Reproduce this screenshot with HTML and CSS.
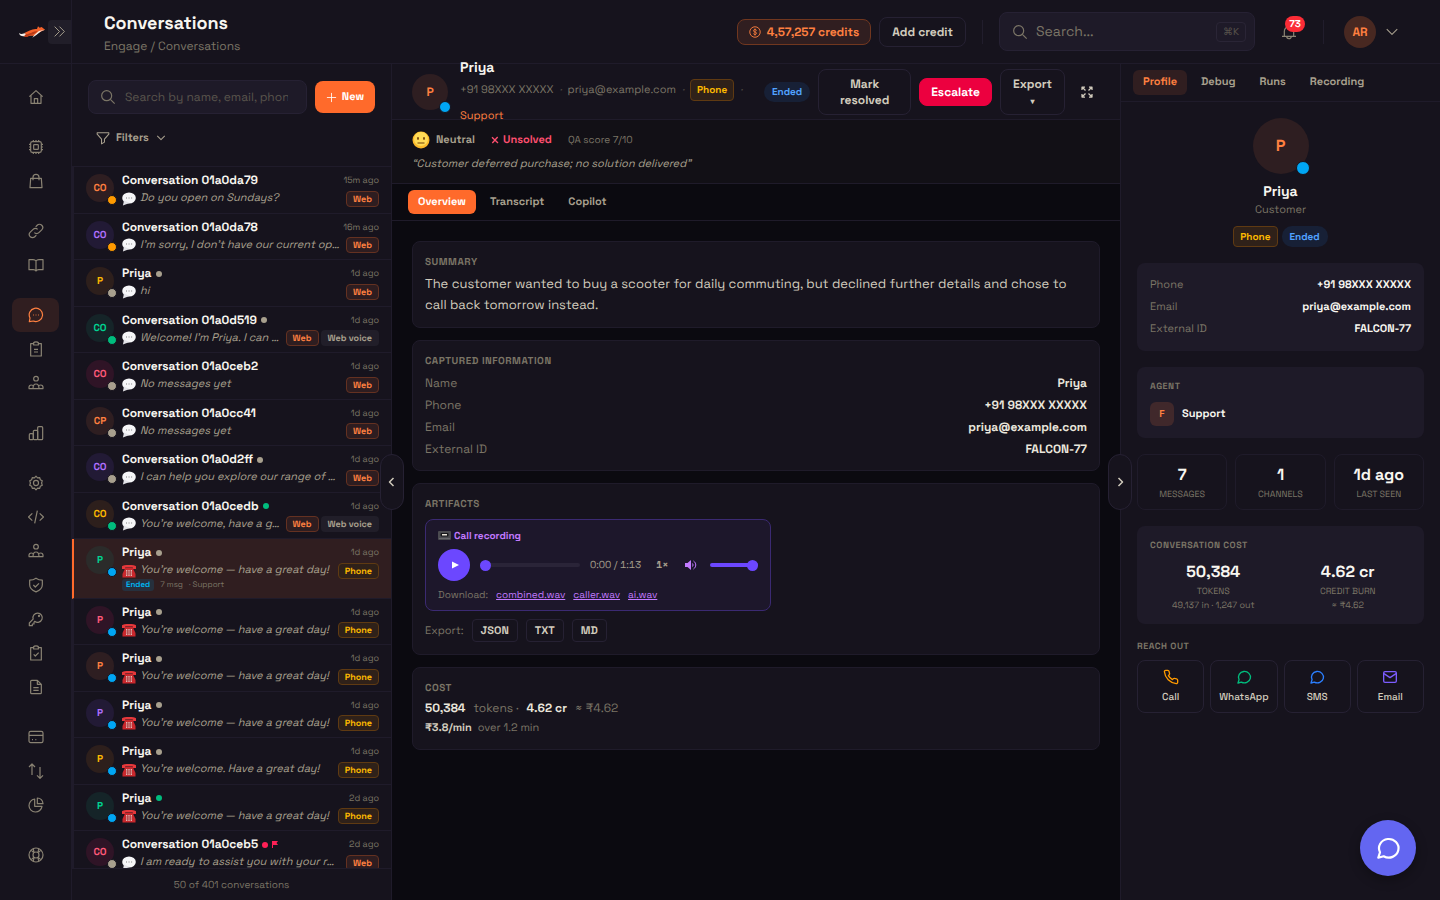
FILE: index.html
```html
<!DOCTYPE html>
<html lang="en">
<head>
  <meta charset="utf-8">
  <meta name="viewport" content="width=device-width, initial-scale=1">
  <title>Conversations</title>
  <link rel="stylesheet" href="styles.css">
</head>
<body>

<!-- icon sprite -->
<svg class="sprite" aria-hidden="true">
  <symbol id="i-home" viewBox="0 0 24 24"><path d="M2 11.500 12 2.500l10 9M4.500 9.500V21.500h15V9.500M9.500 21.500v-7h5v7"/></symbol>
  <symbol id="i-cpu" viewBox="0 0 24 24"><rect x="4" y="4" width="16" height="16" rx="2.500"/><rect x="8.500" y="8.500" width="7" height="7" rx="1"/><path d="M8 4V1.500M12 4V1.500M16 4V1.500M8 22.500V20M12 22.500V20M16 22.500V20M4 8H1.500M4 12H1.500M4 16H1.500M22.500 8H20M22.500 12H20M22.500 16H20"/></symbol>
  <symbol id="i-bag" viewBox="0 0 24 24"><path d="M4 8h16l1 14H3L4 8zM7.500 11V6.500a4.500 4.500 0 0 1 9 0V11"/></symbol>
  <symbol id="i-link" viewBox="0 0 24 24"><path d="M9.500 14.500a4.800 4.800 0 0 0 6.800 0l4.300-4.300a4.800 4.800 0 0 0-6.800-6.800L11.500 5.700M14.500 9.500a4.800 4.800 0 0 0-6.800 0l-4.300 4.300a4.800 4.800 0 0 0 6.800 6.800l2.300-2.300"/></symbol>
  <symbol id="i-book" viewBox="0 0 24 24"><path d="M12 6c-1-1.500-2.500-2-4.500-2H1.500v15H8c2 0 3.200.7 4 2 .8-1.300 2-2 4-2h6.500V4h-6C14.500 4 13 4.500 12 6zM12 6v15"/></symbol>
  <symbol id="i-chat" viewBox="0 0 24 24"><path d="M2 22l1-5.500A10 10 0 1 1 8 21L2 22z"/><path d="M7.500 12h.8M11.600 12h.8M15.700 12h.8" stroke-width="2"/></symbol>
  <symbol id="i-clip" viewBox="0 0 24 24"><path d="M8.500 4H4v18.500h16V4h-4.500M8.500 6V2.500C9.500 1 14.500 1 15.500 2.500V6zM9 16.500h6M9 12.500h6"/></symbol>
  <symbol id="i-users" viewBox="0 0 24 24"><circle cx="12" cy="5.500" r="3.500"/><path d="M1.500 20.500v-2c0-2 1.500-3.500 3.500-3.500 1.500 0 3 1 3.500 2.500M22.500 20.500v-2c0-2-1.500-3.500-3.500-3.500-1.500 0-3 1-3.500 2.500M7.500 20.500c0-4 1.500-7 4.500-7s4.500 3 4.500 7M1 20.500h22"/></symbol>
  <symbol id="i-bars" viewBox="0 0 24 24"><rect x="2" y="13" width="6" height="9" rx="1.500"/><rect x="8" y="8" width="6.500" height="14" rx="1.500"/><rect x="14.500" y="2.500" width="7.500" height="19.500" rx="1.500"/></symbol>
  <symbol id="i-gear" viewBox="0 0 24 24"><circle cx="12" cy="12" r="3.800"/><path d="M12 1.800l2.300 2.400 3.300-.4.800 3.200 3 1.500-1 3.500 1 3.500-3 1.500-.8 3.200-3.300-.4L12 22.200 9.700 19.800l-3.300.4-.8-3.200-3-1.500 1-3.500-1-3.500 3-1.500.8-3.200 3.300.4z"/></symbol>
  <symbol id="i-code" viewBox="0 0 24 24"><path d="M6.500 6.500.8 12l5.700 5.500M17.500 6.500l5.700 5.500-5.700 5.500M14 2.500l-4 19"/></symbol>
  <symbol id="i-shield" viewBox="0 0 24 24"><path d="M12 1.800c3 2.200 6 3 9.500 3v7c0 5-4 8.500-9.500 10.500C6.500 20.300 2.500 16.800 2.500 11.800v-7c3.500 0 6.500-.8 9.500-3zM8 12l3 3 5.500-5.500"/></symbol>
  <symbol id="i-key" viewBox="0 0 24 24"><path d="M10 15.500a7 7 0 1 0-2.300-3.400L2 18v4h4.500v-2.500H9V17z"/><circle cx="16.500" cy="7.500" r=".8"/></symbol>
  <symbol id="i-task" viewBox="0 0 24 24"><path d="M8.500 4H4v18.500h16V4h-4.500M8.500 6V2.500C9.500 1 14.500 1 15.500 2.500V6zM8.500 14l2.500 2.500 5-5"/></symbol>
  <symbol id="i-doc" viewBox="0 0 24 24"><path d="M14 2H5.500A1.500 1.500 0 0 0 4 3.500v17A1.500 1.500 0 0 0 5.500 22h13a1.500 1.500 0 0 0 1.500-1.500V8zM14 2v6h6M8 13h8M8 17h8"/></symbol>
  <symbol id="i-card" viewBox="0 0 24 24"><rect x="1.500" y="3.500" width="21" height="17" rx="2.500"/><path d="M1.500 9.500h21M6 16h1.500M11 16h1.500"/></symbol>
  <symbol id="i-swap" viewBox="0 0 24 24"><path d="M6 18V1.500M1.500 6 6 1.500 10.500 6M18 6v17M13.500 18.500 18 23l4.500-4.500"/></symbol>
  <symbol id="i-pie" viewBox="0 0 24 24"><path d="M10 3a9.800 9.800 0 1 0 11 11H10zM14 1.500V10h8.500A8.500 8.500 0 0 0 14 1.500z"/></symbol>
  <symbol id="i-buoy" viewBox="0 0 24 24"><circle cx="12" cy="12" r="10.500"/><circle cx="12" cy="12" r="4.500"/><path d="M5 5l3.500 3.500M19 5l-3.500 3.500M5 19l3.500-3.500M19 19l-3.500-3.500M8 3l1 5M16 3l-1 5M8 21l1-5M16 21l-1-5"/></symbol>
  <symbol id="i-search" viewBox="0 0 24 24"><circle cx="10" cy="10" r="7.500"/><path d="M15.500 15.500 22 22"/></symbol>
  <symbol id="i-down" viewBox="0 0 24 24"><path d="M3 7l9 9 9-9"/></symbol>
  <symbol id="i-left" viewBox="0 0 24 24"><path d="M15 4l-8 8 8 8"/></symbol>
  <symbol id="i-right" viewBox="0 0 24 24"><path d="M9 4l8 8-8 8"/></symbol>
  <symbol id="i-dright" viewBox="0 0 24 24"><path d="M3 3l9 9-9 9M12 3l9 9-9 9"/></symbol>
  <symbol id="i-funnel" viewBox="0 0 24 24"><path d="M2 3h20v2.500L14.500 14v5L9.500 22v-8L2 5.500z"/></symbol>
  <symbol id="i-plus" viewBox="0 0 24 24"><path d="M12 2v20M2 12h20"/></symbol>
  <symbol id="i-coin" viewBox="0 0 24 24"><circle cx="12" cy="12" r="10.500"/><path d="M15 9c0-1.500-1.300-2-3-2s-3 .8-3 2.500 1.500 2.200 3 2.500 3 .8 3 2.500-1.300 2.500-3 2.500-3-.5-3-2M12 5v14"/></symbol>
  <symbol id="i-bell" viewBox="0 0 24 24"><path d="M5 18.500V11a7 7 0 0 1 14 0v7.500M1.500 18.500h21M8.500 18.500a3.500 3.500 0 0 0 7 0"/></symbol>
  <symbol id="i-expand" viewBox="0 0 24 24"><path d="M2 8V2h6M2.500 2.500 9 9M16 2h6v6M21.500 2.500 15 9M2 16v6h6M2.500 21.500 9 15M16 22h6v-6M21.500 21.500 15 15"/></symbol>
  <symbol id="i-phone" viewBox="0 0 24 24"><path d="M22 16.900v3a2 2 0 0 1-2.200 2A19.800 19.800 0 0 1 2.100 4.200 2 2 0 0 1 4.100 2h3a2 2 0 0 1 2 1.700c.1 1 .4 1.900.7 2.800a2 2 0 0 1-.5 2.100L8.100 9.900a16 16 0 0 0 6 6l1.300-1.300a2 2 0 0 1 2.100-.4c.9.300 1.800.6 2.800.7a2 2 0 0 1 1.700 2z"/></symbol>
  <symbol id="i-bubble" viewBox="0 0 24 24"><path d="M3 21l1.600-5A9 8.600 0 1 1 8 19.600z"/></symbol>
  <symbol id="i-mail" viewBox="0 0 24 24"><rect x="2.500" y="4" width="19" height="16" rx="2"/><path d="M3 7l9 6 9-6"/></symbol>
  <symbol id="i-cross" viewBox="0 0 24 24"><path d="M3 4l18 17M20 3 4 21"/></symbol>
  <!-- coloured pictograms -->
  <symbol id="e-chat" viewBox="0 0 14 14"><ellipse cx="7" cy="6" rx="6.800" ry="5.600" fill="#f6f6f8"/><path d="M2 8.500.9 13.600 7.500 11z" fill="#e3e3e8"/><path d="M4 6h.9M6.600 6h.9M9.200 6h.9" stroke="#777" stroke-width="1.200"/></symbol>
  <symbol id="e-phone" viewBox="0 0 14 14"><path d="M0 5V2.200C1 .6 13 .6 14 2.200V5h-3.200V3.500H3.200V5z" fill="#e5383b"/><path d="M3.200 4h7.600l2.700 6v3.500H.5V10z" fill="#c9282d"/><rect x="4" y="6" width="6" height="6" fill="#e9b4b2"/><path d="M5.500 6v6M7 6v6M8.500 6v6M4 8h6M4 10h6" stroke="#a8383b" stroke-width=".7"/></symbol>
  <symbol id="e-face" viewBox="0 0 18 18"><circle cx="9" cy="9" r="8.500" fill="#fbb92b"/><circle cx="9" cy="8" r="7" fill="#ffdb56"/><ellipse cx="6" cy="7.500" rx="1" ry="1.400" fill="#7a4b12"/><ellipse cx="12" cy="7.500" rx="1" ry="1.400" fill="#7a4b12"/><path d="M5.500 12h7" stroke="#7a4b12" stroke-width="1.100"/></symbol>
  <symbol id="e-tape" viewBox="0 0 13 9"><rect width="13" height="9" rx="1" fill="#4b4b50"/><rect x="2.500" y="2" width="8" height="3.500" rx="1" fill="#17171a"/><rect x="4" y="3" width="5" height="1.500" fill="#e9e4da"/><path d="M1 7.500h11" stroke="#66666b"/></symbol>
</svg>

<div class="app">
  <aside class="sidebar">
    <div class="brand">
      <a href="#" aria-label="Home">
        <svg class="logo" viewBox="0 0 78 34">
          <path d="M0 20c6 5 14 2 20 0l2 8C12 32 2 30 0 20z" fill="#f4efe9"/>
          <path d="M16 20c12-6 24-14 38-12l3-8 5 4 6-2 10 8-10 5-10 5-12 8H32l-8 3-10-1 8-6z" fill="#f4622a"/>
          <path d="M20 24c12 0 22-10 36-10-8 8-14 12-24 12l-8 6-8-1z" fill="#b83a17"/>
          <path d="M78 10 66 15 52 26l-12 8 6-8 14-12z" fill="#f4efe9"/>
        </svg>
      </a>
      <button class="collapse" aria-label="Expand menu"><svg class="icon"><use href="#i-dright"/></svg></button>
    </div>
    <nav class="nav">
      <div class="nav-group"><a href="#" aria-label="Home"><svg class="icon"><use href="#i-home"/></svg></a></div>
      <div class="nav-group">
        <a href="#" aria-label="Models"><svg class="icon"><use href="#i-cpu"/></svg></a>
        <a href="#" aria-label="Store"><svg class="icon"><use href="#i-bag"/></svg></a>
      </div>
      <div class="nav-group">
        <a href="#" aria-label="Links"><svg class="icon"><use href="#i-link"/></svg></a>
        <a href="#" aria-label="Knowledge"><svg class="icon"><use href="#i-book"/></svg></a>
      </div>
      <div class="nav-group">
        <a href="#" class="active" aria-label="Conversations"><svg class="icon"><use href="#i-chat"/></svg></a>
        <a href="#" aria-label="Forms"><svg class="icon"><use href="#i-clip"/></svg></a>
        <a href="#" aria-label="Contacts"><svg class="icon"><use href="#i-users"/></svg></a>
      </div>
      <div class="nav-group"><a href="#" aria-label="Analytics"><svg class="icon"><use href="#i-bars"/></svg></a></div>
      <div class="nav-group">
        <a href="#" aria-label="Settings"><svg class="icon"><use href="#i-gear"/></svg></a>
        <a href="#" aria-label="Developers"><svg class="icon"><use href="#i-code"/></svg></a>
        <a href="#" aria-label="Team"><svg class="icon"><use href="#i-users"/></svg></a>
        <a href="#" aria-label="Security"><svg class="icon"><use href="#i-shield"/></svg></a>
        <a href="#" aria-label="Keys"><svg class="icon"><use href="#i-key"/></svg></a>
        <a href="#" aria-label="Tasks"><svg class="icon"><use href="#i-task"/></svg></a>
        <a href="#" aria-label="Documents"><svg class="icon"><use href="#i-doc"/></svg></a>
      </div>
      <div class="nav-group">
        <a href="#" aria-label="Billing"><svg class="icon"><use href="#i-card"/></svg></a>
        <a href="#" aria-label="Transactions"><svg class="icon"><use href="#i-swap"/></svg></a>
        <a href="#" aria-label="Usage"><svg class="icon"><use href="#i-pie"/></svg></a>
      </div>
      <div class="nav-group"><a href="#" aria-label="Help"><svg class="icon"><use href="#i-buoy"/></svg></a></div>
    </nav>
  </aside>

  <div class="main">
    <header class="topbar">
      <div class="page-title">
        <h1>Conversations</h1>
        <p>Engage / Conversations</p>
      </div>
      <a href="#" class="credits"><svg class="icon"><use href="#i-coin"/></svg>4,57,257 credits</a>
      <button class="btn add-credit">Add credit</button>
      <span class="divider"></span>
      <label class="global-search">
        <svg class="icon"><use href="#i-search"/></svg>
        <input type="text" placeholder="Search..." aria-label="Search">
        <kbd>⌘K</kbd>
      </label>
      <button class="bell" aria-label="Notifications"><svg class="icon"><use href="#i-bell"/></svg><span class="count">73</span></button>
      <span class="divider"></span>
      <button class="account" aria-label="Account"><span class="me">AR</span><svg class="icon"><use href="#i-down"/></svg></button>
    </header>

    <div class="workspace">
      <!-- conversation list -->
      <section class="list-panel">
        <div class="list-head">
          <div class="list-search">
            <label class="search-box">
              <svg class="icon"><use href="#i-search"/></svg>
              <input type="text" placeholder="Search by name, email, phone" aria-label="Search conversations">
            </label>
            <button class="btn-new"><svg class="icon"><use href="#i-plus"/></svg>New</button>
          </div>
          <button class="filters"><svg class="icon"><use href="#i-funnel"/></svg>Filters<svg class="icon caret"><use href="#i-down"/></svg></button>
        </div>

        <ul class="conversations">
          <li class="conv">
            <span class="avatar orange">CO<i class="status amber"></i></span>
            <div class="conv-body">
              <div class="line"><b>Conversation 01a0da79</b><time>15m ago</time></div>
              <div class="line msg"><svg class="emoji"><use href="#e-chat"/></svg><em>Do you open on Sundays?</em><span class="tag web">Web</span></div>
            </div>
          </li>
          <li class="conv">
            <span class="avatar purple">CO<i class="status amber"></i></span>
            <div class="conv-body">
              <div class="line"><b>Conversation 01a0da78</b><time>16m ago</time></div>
              <div class="line msg"><svg class="emoji"><use href="#e-chat"/></svg><em>I’m sorry, I don’t have our current opening</em><span class="tag web">Web</span></div>
            </div>
          </li>
          <li class="conv">
            <span class="avatar yellow">P<i class="status grey"></i></span>
            <div class="conv-body">
              <div class="line"><b>Priya</b><i class="dot grey"></i><time>1d ago</time></div>
              <div class="line msg"><svg class="emoji"><use href="#e-chat"/></svg><em>hi</em><span class="tag web">Web</span></div>
            </div>
          </li>
          <li class="conv">
            <span class="avatar green">CO<i class="status emerald"></i></span>
            <div class="conv-body">
              <div class="line"><b>Conversation 01a0d519</b><i class="dot grey"></i><time>1d ago</time></div>
              <div class="line msg"><svg class="emoji"><use href="#e-chat"/></svg><em>Welcome! I’m Priya. I can help</em><span class="tag web">Web</span><span class="tag voice">Web voice</span></div>
            </div>
          </li>
          <li class="conv">
            <span class="avatar pink">CO<i class="status grey"></i></span>
            <div class="conv-body">
              <div class="line"><b>Conversation 01a0ceb2</b><time>1d ago</time></div>
              <div class="line msg"><svg class="emoji"><use href="#e-chat"/></svg><em>No messages yet</em><span class="tag web">Web</span></div>
            </div>
          </li>
          <li class="conv">
            <span class="avatar orange">CP<i class="status grey"></i></span>
            <div class="conv-body">
              <div class="line"><b>Conversation 01a0cc41</b><time>1d ago</time></div>
              <div class="line msg"><svg class="emoji"><use href="#e-chat"/></svg><em>No messages yet</em><span class="tag web">Web</span></div>
            </div>
          </li>
          <li class="conv">
            <span class="avatar purple">CO<i class="status grey"></i></span>
            <div class="conv-body">
              <div class="line"><b>Conversation 01a0d2ff</b><i class="dot grey"></i><time>1d ago</time></div>
              <div class="line msg"><svg class="emoji"><use href="#e-chat"/></svg><em>I can help you explore our range of scooters</em><span class="tag web">Web</span></div>
            </div>
          </li>
          <li class="conv">
            <span class="avatar yellow">CO<i class="status emerald"></i></span>
            <div class="conv-body">
              <div class="line"><b>Conversation 01a0cedb</b><i class="dot emerald"></i><time>1d ago</time></div>
              <div class="line msg"><svg class="emoji"><use href="#e-chat"/></svg><em>You’re welcome, have a great</em><span class="tag web">Web</span><span class="tag voice">Web voice</span></div>
            </div>
          </li>
          <li class="conv selected">
            <span class="avatar green">P<i class="status blue"></i></span>
            <div class="conv-body">
              <div class="line"><b>Priya</b><i class="dot grey"></i><time>1d ago</time></div>
              <div class="line msg"><svg class="emoji"><use href="#e-phone"/></svg><em>You’re welcome — have a great day!</em><span class="tag phone">Phone</span></div>
              <div class="line extra"><span class="ended">Ended</span><span>7 msg</span><span>· Support</span></div>
            </div>
          </li>
          <li class="conv">
            <span class="avatar pink">P<i class="status blue"></i></span>
            <div class="conv-body">
              <div class="line"><b>Priya</b><i class="dot grey"></i><time>1d ago</time></div>
              <div class="line msg"><svg class="emoji"><use href="#e-phone"/></svg><em>You’re welcome — have a great day!</em><span class="tag phone">Phone</span></div>
            </div>
          </li>
          <li class="conv">
            <span class="avatar orange">P<i class="status blue"></i></span>
            <div class="conv-body">
              <div class="line"><b>Priya</b><i class="dot grey"></i><time>1d ago</time></div>
              <div class="line msg"><svg class="emoji"><use href="#e-phone"/></svg><em>You’re welcome — have a great day!</em><span class="tag phone">Phone</span></div>
            </div>
          </li>
          <li class="conv">
            <span class="avatar purple">P<i class="status blue"></i></span>
            <div class="conv-body">
              <div class="line"><b>Priya</b><i class="dot grey"></i><time>1d ago</time></div>
              <div class="line msg"><svg class="emoji"><use href="#e-phone"/></svg><em>You’re welcome — have a great day!</em><span class="tag phone">Phone</span></div>
            </div>
          </li>
          <li class="conv">
            <span class="avatar yellow">P<i class="status blue"></i></span>
            <div class="conv-body">
              <div class="line"><b>Priya</b><i class="dot grey"></i><time>1d ago</time></div>
              <div class="line msg"><svg class="emoji"><use href="#e-phone"/></svg><em>You’re welcome. Have a great day!</em><span class="tag phone">Phone</span></div>
            </div>
          </li>
          <li class="conv">
            <span class="avatar green">P<i class="status blue"></i></span>
            <div class="conv-body">
              <div class="line"><b>Priya</b><i class="dot emerald"></i><time>2d ago</time></div>
              <div class="line msg"><svg class="emoji"><use href="#e-phone"/></svg><em>You’re welcome — have a great day!</em><span class="tag phone">Phone</span></div>
            </div>
          </li>
          <li class="conv">
            <span class="avatar pink">CO<i class="status grey"></i></span>
            <div class="conv-body">
              <div class="line"><b>Conversation 01a0ceb5</b><i class="dot rose"></i><svg class="flag" viewBox="0 0 6 7"><path d="M0 0h6L4.500 2 6 4H1v3H0z"/></svg><time>2d ago</time></div>
              <div class="line msg"><svg class="emoji"><use href="#e-chat"/></svg><em>I am ready to assist you with your request</em><span class="tag web">Web</span></div>
            </div>
          </li>
        </ul>
        <footer class="list-foot">50 of 401 conversations</footer>
        <button class="handle handle-left" aria-label="Hide list"><svg class="icon"><use href="#i-left"/></svg></button>
      </section>

      <!-- open conversation -->
      <section class="detail">
        <header class="detail-head">
          <span class="avatar mid orange">P<i class="status blue"></i></span>
          <div class="who">
            <h2>Priya</h2>
            <div class="meta">
              <span>+91 98XXX XXXXX</span><i>·</i>
              <span>priya@example.com</span><i>·</i>
              <span class="badge phone">Phone</span><i>·</i>
              <a href="#">Support</a>
            </div>
          </div>
          <span class="pill">Ended</span>
          <button class="btn resolve">Mark resolved</button>
          <button class="btn escalate">Escalate</button>
          <button class="btn export">Export <small>▾</small></button>
          <button class="expand" aria-label="Full screen"><svg class="icon"><use href="#i-expand"/></svg></button>
        </header>
        <div class="insight">
          <div class="insight-row">
            <svg class="face"><use href="#e-face"/></svg><b>Neutral</b>
            <b class="unsolved"><svg class="icon"><use href="#i-cross"/></svg>Unsolved</b>
            <span>QA score 7/10</span>
          </div>
          <p>“Customer deferred purchase; no solution delivered”</p>
        </div>
        <div class="tabs">
          <button class="tab active">Overview</button>
          <button class="tab">Transcript</button>
          <button class="tab">Copilot</button>
        </div>
        <div class="cards">
          <article class="card">
            <h3>Summary</h3>
            <p class="summary">The customer wanted to buy a scooter for daily commuting, but declined further details and chose to call back tomorrow instead.</p>
          </article>
          <article class="card">
            <h3>Captured information</h3>
            <dl class="facts">
              <div><dt>Name</dt><dd>Priya</dd></div>
              <div><dt>Phone</dt><dd>+91 98XXX XXXXX</dd></div>
              <div><dt>Email</dt><dd>priya@example.com</dd></div>
              <div><dt>External ID</dt><dd>FALCON-77</dd></div>
            </dl>
          </article>
          <article class="card">
            <h3>Artifacts</h3>
            <div class="player">
              <h4><svg class="tape"><use href="#e-tape"/></svg>Call recording</h4>
              <div class="controls">
                <button class="play" aria-label="Play"><svg viewBox="0 0 8 8"><path d="M0 0l8 4-8 4z"/></svg></button>
                <input class="seek" type="range" min="0" max="73" value="0" aria-label="Seek">
                <span class="time">0:00 / 1:13</span>
                <button class="speed">1×</button>
                <button class="mute" aria-label="Mute"><svg viewBox="0 0 12 12"><path d="M0 4h2.500L6 1v10L2.500 8H0z"/><path class="wave" d="M7.500 4.500q1.200 1.500 0 3M8.500 2c3 2 3 6 0 8"/></svg></button>
                <input class="volume" type="range" min="0" max="100" value="100" aria-label="Volume">
              </div>
              <div class="downloads">Download: <a href="#">combined.wav</a><a href="#">caller.wav</a><a href="#">ai.wav</a></div>
            </div>
            <div class="exports">Export:
              <button>JSON</button><button>TXT</button><button>MD</button>
            </div>
          </article>
          <article class="card">
            <h3>Cost</h3>
            <p class="cost"><b>50,384</b><span>tokens ·</span><b>4.62 cr</b><span>≈ ₹4.62</span></p>
            <p class="cost rate"><b>₹3.8/min</b><span>over 1.2 min</span></p>
          </article>
        </div>
      </section>

      <!-- customer profile -->
      <aside class="profile">
        <div class="profile-tabs">
          <button class="active">Profile</button>
          <button>Debug</button>
          <button>Runs</button>
          <button>Recording</button>
        </div>
        <div class="profile-body">
          <div class="person">
            <span class="avatar big orange">P<i class="status blue"></i></span>
            <h2>Priya</h2>
            <p>Customer</p>
            <div class="badges"><span class="badge phone">Phone</span><span class="pill">Ended</span></div>
          </div>
          <dl class="box facts contact">
            <div><dt>Phone</dt><dd>+91 98XXX XXXXX</dd></div>
            <div><dt>Email</dt><dd>priya@example.com</dd></div>
            <div><dt>External ID</dt><dd>FALCON-77</dd></div>
          </dl>
          <div class="box agent">
            <h3>Agent</h3>
            <div class="agent-row"><span>F</span><b>Support</b></div>
          </div>
          <div class="stats">
            <div><b>7</b><span>MESSAGES</span></div>
            <div><b>1</b><span>CHANNELS</span></div>
            <div><b>1d ago</b><span>LAST SEEN</span></div>
          </div>
          <div class="box">
            <h3>Conversation cost</h3>
            <div class="spend">
              <div><b>50,384</b><span>TOKENS</span><span>49,137 in · 1,247 out</span></div>
              <div><b>4.62 cr</b><span>CREDIT BURN</span><span>≈ ₹4.62</span></div>
            </div>
          </div>
          <div class="reach">
            <h3>Reach out</h3>
            <div class="reach-row">
              <button><svg class="icon call"><use href="#i-phone"/></svg>Call</button>
              <button><svg class="icon whatsapp"><use href="#i-bubble"/></svg>WhatsApp</button>
              <button><svg class="icon sms"><use href="#i-bubble"/></svg>SMS</button>
              <button><svg class="icon email"><use href="#i-mail"/></svg>Email</button>
            </div>
          </div>
        </div>
        <button class="handle handle-right" aria-label="Hide profile"><svg class="icon"><use href="#i-right"/></svg></button>
      </aside>
    </div>
  </div>
</div>

<button class="fab" aria-label="Open chat"><svg class="icon"><use href="#i-bubble"/></svg></button>

</body>
</html>
```
FILE: styles.css
```css
:root {
  --bg: #0b0a10;
  --panel: #16131d;
  --box: #1e1a28;
  --line: #1f1b2a;
  --white: #f8f6f0;
  --light: #d2ccbd;
  --mid: #a8a08e;
  --muted: #7b7566;
  --orange: #ff6a2b;
  --orange-text: #ff8040;
}

* {
  box-sizing: border-box;
}

body {
  margin: 0;
  background: var(--bg);
  color: var(--light);
  font-family: "Space Grotesk", Inter, "Liberation Sans", sans-serif;
  font-size: 12px;
  line-height: 18px;
  text-rendering: geometricPrecision;
}

h1, h2, h3, h4, p, ul, dl, dd {
  margin: 0;
  padding: 0;
}

button, input {
  font: inherit;
  color: inherit;
  border: 0;
  padding: 0;
  background: none;
  text-rendering: inherit;
}

button {
  cursor: pointer;
}

a {
  color: inherit;
  text-decoration: none;
}

b {
  font-weight: 600;
}

.sprite {
  position: absolute;
  width: 0;
  height: 0;
}

.icon {
  width: 16px;
  height: 16px;
  flex: none;
  fill: none;
  stroke: currentColor;
  stroke-width: 1.8;
  stroke-linejoin: round;
}

.app {
  display: flex;
  height: 100vh;
  overflow: hidden;
}

/* sidebar */
.sidebar {
  width: 72px;
  flex: none;
  background: var(--panel);
  border-right: 1px solid var(--line);
}

.brand {
  display: flex;
  align-items: center;
  justify-content: flex-end;
  gap: 3px;
  height: 64px;
  border-bottom: 1px solid var(--line);
}

.logo {
  display: block;
  width: 26px;
  height: 12px;
}

.collapse {
  display: flex;
  align-items: center;
  justify-content: center;
  width: 23px;
  height: 24px;
  border-radius: 4px 0 0 4px;
  background: #211e29;
  color: var(--mid);
}

.collapse .icon {
  width: 13px;
  height: 13px;
}

.nav {
  display: flex;
  flex-direction: column;
  gap: 16px;
  padding: 16px 12px;
}

.nav a {
  display: flex;
  align-items: center;
  justify-content: center;
  height: 34px;
  border-radius: 8px;
  color: #8a8373;
}

.nav a.active {
  background: #301e20;
  color: var(--orange-text);
}

/* top bar */
.main {
  display: flex;
  flex-direction: column;
  flex: 1;
  min-width: 0;
}

.topbar {
  display: flex;
  align-items: center;
  height: 64px;
  flex: none;
  padding: 0 40px 0 32px;
  background: var(--panel);
  border-bottom: 1px solid var(--line);
}

.page-title {
  flex: 1;
  padding-top: 2px;
}

.page-title h1 {
  color: var(--white);
  font-size: 18px;
  line-height: 26px;
  font-weight: 600;
}

.page-title p {
  color: var(--muted);
}

.credits {
  display: flex;
  align-items: center;
  gap: 6px;
  height: 26px;
  padding: 0 11px;
  border: 1px solid #71371f;
  border-radius: 8px;
  background: #301e20;
  color: var(--orange-text);
  font-weight: 600;
}

.credits .icon {
  width: 12px;
  height: 12px;
}

.btn {
  padding: 5px 12px;
  border: 1px solid #262133;
  border-radius: 8px;
  font-weight: 600;
  line-height: 16px;
}

.add-credit {
  height: 30px;
  margin-left: 8px;
}

.divider {
  width: 1px;
  height: 24px;
  margin: 0 16px;
  background: #211d2c;
}

.global-search {
  display: flex;
  align-items: center;
  gap: 8px;
  width: 256px;
  height: 39px;
  padding: 0 8px 0 12px;
  border: 1px solid #262133;
  border-radius: 8px;
  background: var(--box);
  color: var(--muted);
}

.global-search input {
  flex: 1;
  min-width: 0;
  font-size: 14px;
  outline: none;
}

input::placeholder {
  color: var(--muted);
  opacity: 1;
}

kbd {
  padding: 0 6px;
  border: 1px solid #2a2536;
  border-radius: 4px;
  color: #57524b;
  font-family: inherit;
  font-size: 10px;
}

.bell {
  position: relative;
  display: flex;
  margin: 0 10px 0 26px;
  color: #8a8373;
}

.count {
  position: absolute;
  top: -8px;
  left: 4px;
  min-width: 20px;
  border-radius: 8px;
  background: #fb2c36;
  color: #fff;
  font-size: 10px;
  font-weight: 700;
  line-height: 16px;
}

.account {
  display: flex;
  align-items: center;
  gap: 9px;
  margin: 0 1px 0 4px;
  color: var(--mid);
}

.account .icon {
  width: 14px;
  height: 14px;
}

.me {
  width: 32px;
  border-radius: 50%;
  background: #482821;
  color: var(--orange-text);
  font-weight: 600;
  line-height: 32px;
}

.workspace {
  display: flex;
  flex: 1;
  min-height: 0;
}

/* conversation list */
.list-panel {
  position: relative;
  display: flex;
  flex-direction: column;
  width: 320px;
  flex: none;
  background: var(--panel);
  border-right: 1px solid var(--line);
}

.list-head {
  height: 103px;
  padding: 16px 16px 0;
  border-bottom: 1px solid var(--line);
}

.list-search {
  display: flex;
  align-items: center;
  gap: 8px;
}

.search-box {
  display: flex;
  align-items: center;
  gap: 9px;
  flex: 1;
  min-width: 0;
  height: 34px;
  padding: 0 18px 0 11px;
  border: 1px solid #262133;
  border-radius: 8px;
  background: var(--box);
  color: var(--muted);
}

.search-box input {
  flex: 1;
  min-width: 0;
  outline: none;
}

.search-box input::placeholder {
  color: #59544c;
}

.btn-new {
  display: flex;
  align-items: center;
  justify-content: center;
  gap: 5px;
  width: 60px;
  height: 32px;
  border-radius: 8px;
  background: var(--orange);
  color: #fff;
  font-size: 11px;
  font-weight: 700;
}

.btn-new .icon {
  width: 11px;
  height: 11px;
}

.filters {
  display: flex;
  align-items: center;
  gap: 6px;
  margin: 15px 0 0 8px;
  color: var(--mid);
  font-size: 11px;
  font-weight: 600;
}

.filters .icon {
  width: 14px;
  height: 14px;
}

.filters .caret {
  width: 10px;
  height: 10px;
  margin-left: 1px;
  stroke-width: 2.5;
}

.conversations {
  flex: 1;
  min-height: 0;
  overflow: hidden;
  list-style: none;
}

.conv {
  display: flex;
  gap: 8px;
  padding: 4px 12px 6px;
  border-bottom: 1px solid var(--line);
  border-left: 2px solid var(--line);
}

.conv.selected {
  border-left-color: var(--orange);
  background: #301e20;
}

.avatar {
  position: relative;
  width: 28px;
  height: 28px;
  flex: none;
  border-radius: 50%;
  font-size: 10px;
  font-weight: 600;
  line-height: 28px;
  text-align: center;
}

.conv .avatar {
  margin-top: 3px;
}

.avatar.mid {
  width: 36px;
  height: 36px;
  font-size: 12px;
  line-height: 36px;
}

.avatar.big {
  width: 56px;
  height: 56px;
  font-size: 16px;
  line-height: 56px;
}

.avatar.orange { background: #2e1e21; color: var(--orange-text); }
.avatar.purple { background: #221a35; color: #b070ff; }
.avatar.yellow { background: #2d1f1c; color: #fdb900; }
.avatar.green { background: #152428; color: #00d492; }
.avatar.pink { background: #2f1426; color: #ff5a7a; }
.selected .avatar.green { background: #2b2b2a; }

.status {
  position: absolute;
  right: -3px;
  bottom: -3px;
  width: 10px;
  height: 10px;
  border: 1px solid var(--panel);
  border-radius: 50%;
}

.mid .status {
  width: 12px;
  height: 12px;
}

.big .status {
  right: -1px;
  bottom: -1px;
  width: 14px;
  height: 14px;
}

.dot {
  width: 6px;
  height: 6px;
  border-radius: 50%;
}

.amber { background: #fe9a00; }
.grey { background: var(--mid); }
.emerald { background: #00bc7d; }
.blue { background: #00a6f4; }
.rose { background: #ff2056; }

.flag {
  width: 6px;
  height: 7px;
  fill: #ff2056;
}

.conv-body {
  flex: 1;
  min-width: 0;
}

.line {
  display: flex;
  align-items: center;
  gap: 4px;
  line-height: 1.5;
}

.line b {
  color: var(--white);
  font-size: 12px;
  line-height: 1.625;
}

.line time {
  margin-left: auto;
  color: var(--muted);
  font-size: 9px;
}

.msg {
  height: 16px;
  gap: 2px;
}

.msg em {
  flex: 1;
  min-width: 0;
  margin: 0 4px 0 2px;
  overflow: hidden;
  color: var(--mid);
  font-size: 11px;
  text-overflow: ellipsis;
  white-space: nowrap;
}

.emoji {
  width: 14px;
  height: 14px;
  flex: none;
}

.tag {
  padding: 0 6px;
  border: 1px solid transparent;
  border-radius: 4px;
  font-size: 9px;
  font-weight: 600;
  line-height: 14px;
}

.tag.web {
  border-color: #643121;
  background: #2e1d20;
  color: var(--orange-text);
}

.tag.voice {
  background: #211e29;
  color: var(--mid);
}

.phone {
  border-color: #5f3a12;
  background: #2f2119;
  color: #fdb900;
}

.extra {
  height: 13px;
  gap: 6px;
  color: var(--muted);
  font-size: 8px;
}

.extra .ended {
  padding: 0 4px;
  border-radius: 3px;
  background: #26303d;
  color: #00b4f0;
  font-weight: 600;
  line-height: 12px;
}

.list-foot {
  height: 32px;
  flex: none;
  border-top: 1px solid var(--line);
  color: var(--muted);
  font-size: 10px;
  line-height: 31px;
  text-align: center;
}

/* handles that overlap the panel edges */
.handle {
  position: absolute;
  top: 50%;
  z-index: 2;
  display: flex;
  align-items: center;
  justify-content: center;
  width: 24px;
  height: 56px;
  margin-top: -28px;
  border: 1px solid #262133;
  border-radius: 12px;
  background: var(--panel);
  color: var(--light);
}

.handle .icon {
  width: 12px;
  height: 12px;
  stroke-width: 3;
}

.handle-left {
  right: -13px;
}

.handle-right {
  left: -13px;
}

/* conversation detail */
.detail {
  flex: 1;
  min-width: 0;
}

.detail-head {
  display: flex;
  align-items: center;
  gap: 8px;
  height: 56px;
  padding: 0 20px;
  background: var(--panel);
  border-bottom: 1px solid var(--line);
}

.who {
  flex: 1;
  min-width: 0;
  margin-left: 4px;
}

.who h2 {
  color: var(--white);
  font-size: 14px;
  font-weight: 600;
  line-height: 21px;
}

.meta {
  display: flex;
  flex-wrap: wrap;
  align-items: center;
  gap: 6px;
  color: var(--muted);
  font-size: 11px;
}

.meta i {
  color: #4f4a45;
}

.meta a {
  color: var(--orange-text);
}

.badge {
  padding: 0 6px;
  border: 1px solid #5f3a12;
  border-radius: 4px;
  font-size: 10px;
  font-weight: 600;
  line-height: 20px;
}

.pill {
  padding: 0 8px;
  border-radius: 10px;
  background: #172036;
  color: #51a2ff;
  font-size: 10px;
  font-weight: 600;
  line-height: 20px;
}

.resolve {
  width: 93px;
}

.resolve, .export {
  padding: 6px 12px;
}

.export {
  width: 65px;
}

.export small {
  font-size: 8px;
  line-height: 8px;
}

.escalate {
  padding: 5px 11px;
  border-color: #ec003f;
  background: #ec003f;
  color: #fff;
}

.expand {
  display: flex;
  align-items: center;
  justify-content: center;
  width: 27px;
  height: 28px;
  color: var(--light);
}

.expand .icon {
  width: 12px;
  height: 12px;
  stroke-width: 2.5;
}

.insight {
  padding: 11px 20px 10px;
  background: #121016;
  border-bottom: 1px solid var(--line);
}

.insight-row {
  display: flex;
  align-items: center;
  color: var(--mid);
  font-size: 11px;
}

.insight-row span {
  margin-left: 16px;
  color: var(--muted);
  font-size: 10px;
}

.face {
  width: 18px;
  height: 18px;
  margin-right: 6px;
}

.unsolved {
  display: flex;
  align-items: center;
  gap: 4px;
  margin-left: 16px;
  color: #ff4f70;
}

.unsolved .icon {
  width: 8px;
  height: 8px;
  stroke-width: 4;
}

.insight p {
  margin-top: 6px;
  color: var(--mid);
  font-size: 11px;
  font-style: italic;
}

.tabs {
  display: flex;
  gap: 4px;
  padding: 6px 16px;
  border-bottom: 1px solid var(--line);
}

.tab {
  padding: 0 10px;
  border-radius: 6px;
  color: var(--mid);
  font-size: 11px;
  font-weight: 600;
  line-height: 24px;
}

.tab.active {
  background: var(--orange);
  color: #fff;
}

.cards {
  display: grid;
  gap: 12px;
  padding: 20px;
}

.card {
  padding: 12px;
  border: 1px solid var(--line);
  border-radius: 8px;
  background: var(--panel);
}

h3 {
  color: var(--muted);
  font-size: 10px;
  font-weight: 600;
  letter-spacing: 0.5px;
  line-height: 15px;
  text-transform: uppercase;
}

.card h3 {
  margin-bottom: 4px;
}

.summary {
  font-size: 13px;
  line-height: 21px;
}

.card .facts {
  display: grid;
  gap: 4px;
  margin-top: 6px;
}

.facts div {
  display: flex;
  justify-content: space-between;
}

.facts dt {
  color: var(--muted);
}

.facts dd {
  color: #eae6dc;
  font-weight: 600;
}

.player {
  width: 346px;
  max-width: 100%;
  margin-top: 8px;
  padding: 8px 12px;
  border: 1px solid #3b2a72;
  border-radius: 8px;
  background: #1d172b;
}

.player h4 {
  display: flex;
  align-items: center;
  gap: 3px;
  color: #c27aff;
  font-size: 10px;
  font-weight: 600;
  line-height: 15px;
}

.tape {
  width: 13px;
  height: 9px;
}

.controls {
  display: flex;
  align-items: center;
  margin: 6px 0;
}

.play {
  display: flex;
  align-items: center;
  justify-content: center;
  width: 32px;
  height: 32px;
  margin-right: 10px;
  border-radius: 50%;
  background: #6c47ff;
}

.play svg {
  width: 7px;
  height: 8px;
  margin-left: 3px;
  fill: #fff;
}

input[type="range"] {
  flex: none;
  height: 4px;
  margin: 0;
  appearance: none;
  border-radius: 2px;
  background: #2a2438;
}

input[type="range"]::-webkit-slider-thumb {
  appearance: none;
  width: 11px;
  height: 11px;
  border-radius: 50%;
  background: #6c47ff;
}

.seek {
  width: 100px;
}

input.volume {
  width: 48px;
  background: #6c47ff;
}

.time, .speed {
  color: var(--mid);
  font-size: 10px;
  font-variant-numeric: tabular-nums;
  white-space: nowrap;
}

.time {
  width: 52px;
  margin-left: 10px;
}

.speed {
  margin-left: 14px;
  font-weight: 600;
}

.mute {
  display: flex;
  margin: 0 13px 0 auto;
}

.mute svg {
  width: 12px;
  height: 12px;
  fill: #c27aff;
}

.mute .wave {
  fill: none;
  stroke: #c27aff;
}

.downloads {
  display: flex;
  gap: 8px;
  color: var(--muted);
  font-size: 10px;
  line-height: 15px;
}

.downloads a {
  color: #c27aff;
  text-decoration: underline;
}

.exports {
  display: flex;
  align-items: center;
  gap: 8px;
  margin-top: 8px;
  color: var(--muted);
  font-size: 11px;
}

.exports button {
  height: 23px;
  padding: 0 8px;
  border: 1px solid #262133;
  border-radius: 4px;
  color: var(--light);
  font-weight: 600;
}

.cost {
  display: flex;
  gap: 8px;
  color: var(--muted);
}

.cost b {
  color: #eae6dc;
}

.rate {
  gap: 6px;
  margin-top: 2px;
  font-size: 11px;
}

.rate b {
  color: var(--light);
}

/* profile */
.profile {
  position: relative;
  width: 320px;
  flex: none;
  background: var(--panel);
  border-left: 1px solid var(--line);
}

.profile-tabs {
  display: flex;
  gap: 4px;
  padding: 6px 12px;
  border-bottom: 1px solid var(--line);
}

.profile-tabs button {
  padding: 0 10px;
  border-radius: 6px;
  color: var(--mid);
  font-size: 11px;
  font-weight: 600;
  line-height: 25px;
}

.profile-tabs .active {
  background: #301e20;
  color: var(--orange-text);
}

.profile-body {
  display: grid;
  gap: 16px;
  padding: 16px;
}

.person {
  display: flex;
  flex-direction: column;
  align-items: center;
}

.person h2 {
  margin-top: 8px;
  color: var(--white);
  font-size: 14px;
  font-weight: 600;
  line-height: 20px;
}

.person p {
  color: var(--muted);
  font-size: 11px;
  line-height: 16px;
}

.badges {
  display: flex;
  gap: 4px;
  margin-top: 8px;
}

.badges .badge {
  line-height: 19px;
}

.badges .pill {
  line-height: 21px;
}

.box {
  padding: 12px 13px;
  border-radius: 8px;
  background: var(--box);
}

.box h3, .reach h3, .stats span, .spend span {
  font-size: 9px;
}

.contact {
  padding: 11px 13px;
  font-size: 11px;
  line-height: 22px;
}

.box.facts dd {
  color: var(--white);
}

.agent-row {
  display: flex;
  align-items: center;
  gap: 8px;
  margin-top: 8px;
}

.agent-row span {
  width: 24px;
  border-radius: 6px;
  background: #40282b;
  color: var(--orange-text);
  font-size: 10px;
  font-weight: 600;
  line-height: 24px;
  text-align: center;
}

.agent-row b {
  color: var(--white);
  font-size: 11px;
}

.stats {
  display: grid;
  grid-template-columns: repeat(3, 1fr);
  gap: 8px;
}

.stats div {
  padding: 8px 0;
  border: 1px solid var(--line);
  border-radius: 8px;
  text-align: center;
}

.stats b, .spend b {
  display: block;
  color: var(--white);
  font-size: 16px;
  line-height: 24px;
}

.stats span, .spend span {
  display: block;
  color: var(--muted);
  line-height: 14px;
}

.spend {
  display: grid;
  grid-template-columns: 1fr 1fr;
  gap: 8px;
  margin-top: 7px;
  text-align: center;
}

.reach h3 {
  margin-bottom: 8px;
  line-height: 12px;
}

.reach-row {
  display: grid;
  grid-template-columns: repeat(4, 1fr);
  gap: 6px;
}

.reach-row button {
  display: flex;
  flex-direction: column;
  align-items: center;
  gap: 4px;
  padding: 8px 0;
  border: 1px solid #262133;
  border-radius: 8px;
  font-size: 10px;
  font-weight: 500;
  line-height: 15px;
}

.reach-row .icon {
  stroke-width: 2;
}

.call { color: #fe9a00; }
.whatsapp { color: #00bc7d; }
.sms { color: #2b7fff; }
.email { color: #7c5cff; }

.fab {
  position: fixed;
  right: 24px;
  bottom: 24px;
  display: flex;
  align-items: center;
  justify-content: center;
  width: 56px;
  height: 56px;
  border-radius: 50%;
  background: #6366f1;
  color: #fff;
  box-shadow: 0 4px 12px rgba(0, 0, 0, 0.3);
}

.fab .icon {
  width: 26px;
  height: 26px;
  stroke-width: 2;
}
```
